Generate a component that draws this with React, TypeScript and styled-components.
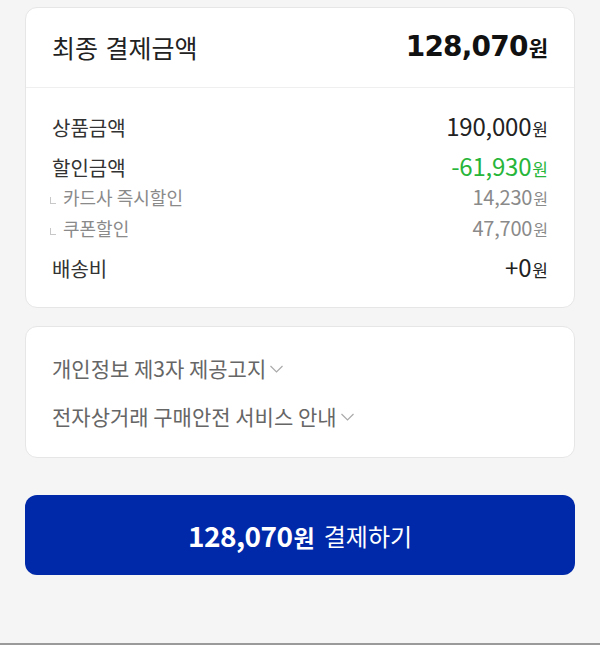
import React from 'react'
import styled, { createGlobalStyle } from 'styled-components'

const GlobalStyle = createGlobalStyle`
  html, body {
    margin: 0;
    padding: 0;
    background: #f5f5f5;
  }
  body {
    font-family: "Noto Sans CJK KR", "Noto Sans", sans-serif;
    color: #222;
  }
`

const Page = styled.div`
  min-height: 645px;
  box-sizing: border-box;
  padding: 7px 25px 0;
  display: flex;
  flex-direction: column;
  border-bottom: 2px solid #9a9a9a;
`

const Card = styled.div<{ $gap?: number }>`
  background: #fff;
  border: 1px solid #e6e6e6;
  border-radius: 12px;
  margin-bottom: ${(p) => p.$gap ?? 0}px;
`

const Header = styled.div`
  height: 80px;
  box-sizing: border-box;
  padding: 0 26px 2px;
  display: flex;
  align-items: center;
  justify-content: space-between;
  border-bottom: 1px solid #efefef;
`

const HeaderLabel = styled.span`
  font-size: 25px;
  color: #222;
  word-spacing: 2px;
`

const Total = styled.span`
  display: flex;
  align-items: baseline;
  font-family: "DejaVu Sans", "Noto Sans CJK KR", sans-serif;
  font-size: 28px;
  font-weight: 700;
  color: #111;
  letter-spacing: -0.8px;
`

const Unit = styled.span<{ $size: number; $bold?: boolean }>`
  font-family: "Noto Sans CJK KR", sans-serif;
  font-size: ${(p) => p.$size}px;
  font-weight: ${(p) => (p.$bold ? 700 : 400)};
  letter-spacing: 0;
  margin-left: 1px;
`

const Rows = styled.div`
  padding: 22px 26px 25px;
  display: flex;
  flex-direction: column;
`

const Row = styled.div<{ $top: number }>`
  height: 31px;
  margin-top: ${(p) => p.$top}px;
  display: flex;
  align-items: baseline;
  justify-content: space-between;
`

const Label = styled.span<{ $sub?: boolean }>`
  line-height: 31px;
  font-size: ${(p) => (p.$sub ? 18 : 20)}px;
  color: ${(p) => (p.$sub ? '#8a8a8a' : '#333')};
`

const Corner = styled.span`
  display: inline-block;
  width: 5px;
  height: 6px;
  border-left: 1px solid #c8c8c8;
  border-bottom: 1px solid #c8c8c8;
  margin: 0 7px 0 -2px;
  vertical-align: 1px;
`

const Value = styled.span<{ $color: string; $size: number }>`
  line-height: 31px;
  font-size: ${(p) => p.$size}px;
  color: ${(p) => p.$color};
  letter-spacing: -0.2px;
`

const Notices = styled.div`
  padding: 17px 26px 17px;
  display: flex;
  flex-direction: column;
`

const Notice = styled.button`
  height: 48px;
  padding: 0;
  border: none;
  background: none;
  display: flex;
  align-items: center;
  gap: 3px;
  font-family: inherit;
  font-size: 21px;
  color: #666;
  cursor: pointer;
`

const PayButton = styled.button`
  height: 80px;
  border: none;
  border-radius: 12px;
  background: #0029a9;
  color: #fff;
  font-family: inherit;
  display: flex;
  align-items: center;
  justify-content: center;
  gap: 9px;
  cursor: pointer;
`

const PayAmount = styled.span`
  display: flex;
  align-items: baseline;
  font-size: 28px;
  font-weight: 700;
  letter-spacing: -0.5px;
`

const PayText = styled.span`
  font-size: 24px;
  font-weight: 400;
`

const Chevron = () => (
  <svg width="15" height="15" viewBox="0 0 15 15" fill="none">
    <path d="M1.5 5l6 6 6-6" stroke="#aaa" strokeWidth="1.2" />
  </svg>
)

type Line = { label: string; value: string; sub?: boolean; color?: string; top: number }

const lines: Line[] = [
  { label: '상품금액', value: '190,000', top: 0 },
  { label: '할인금액', value: '-61,930', color: '#27b53a', top: 9 },
  { label: '카드사 즉시할인', value: '14,230', sub: true, top: 0 },
  { label: '쿠폰할인', value: '47,700', sub: true, top: 0 },
  { label: '배송비', value: '+0', top: 8 },
]

const App: React.FC = () => {
  return (
    <>
      <GlobalStyle />
      <Page>
        <Card $gap={18}>
          <Header>
            <HeaderLabel>최종 결제금액</HeaderLabel>
            <Total>
              128,070<Unit $size={21} $bold>원</Unit>
            </Total>
          </Header>
          <Rows>
            {lines.map((l) => (
              <Row key={l.label} $top={l.top}>
                <Label $sub={l.sub}>
                  {l.sub && <Corner />}
                  {l.label}
                </Label>
                <Value
                  $size={l.sub ? 20 : 24}
                  $color={l.color ?? (l.sub ? '#8a8a8a' : '#222')}
                >
                  {l.value}
                  <Unit $size={l.sub ? 16 : 17}>원</Unit>
                </Value>
              </Row>
            ))}
          </Rows>
        </Card>

        <Card $gap={37}>
          <Notices>
            <Notice>
              개인정보 제3자 제공고지
              <Chevron />
            </Notice>
            <Notice>
              전자상거래 구매안전 서비스 안내
              <Chevron />
            </Notice>
          </Notices>
        </Card>

        <PayButton>
          <PayAmount>
            128,070<Unit $size={23} $bold>원</Unit>
          </PayAmount>
          <PayText>결제하기</PayText>
        </PayButton>
      </Page>
    </>
  )
}

export default App
